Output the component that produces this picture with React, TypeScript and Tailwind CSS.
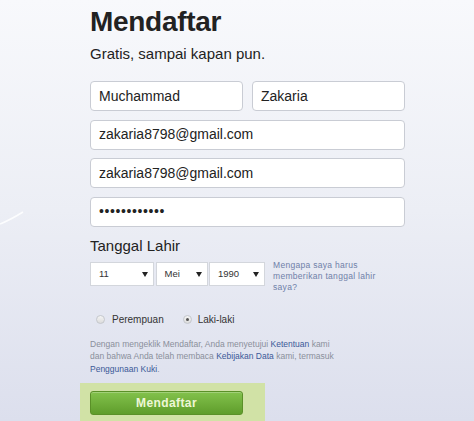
import React from 'react';

const font = "font-['Liberation_Sans',Arial,sans-serif]";

interface FieldProps {
    value: string,
    className?: string
}

const Field: React.FC<FieldProps> = (props) => (
    <div className={`h-[30px] bg-white border border-[#c9ccd4] rounded-[4px] flex items-center pl-[8px] text-[14px] text-[#222] ${props.className ?? ''}`}>
        {props.value}
    </div>
);

const Arrow = () => (
    <svg width="6" height="5" viewBox="0 0 6 5" className="shrink-0">
        <path d="M0 0 L6 0 L3 5 Z" fill="#222" />
    </svg>
);

const Select: React.FC<{ value: string, width: string }> = (props) => (
    <div className={`${props.width} h-[24px] bg-white border border-[#d3d6dc] flex items-center justify-between pl-[8px] pr-[5px] text-[9.5px] text-[#333]`}>
        <span>{props.value}</span>
        <Arrow />
    </div>
);

const Radio: React.FC<{ checked?: boolean }> = (props) => (
    <span className="w-[9px] h-[9px] rounded-full border border-[#c4c7cc] bg-linear-to-b from-[#f4f4f4] to-[#dcdcdc] flex items-center justify-center shrink-0">
        {props.checked && <span className="w-[3px] h-[3px] rounded-full bg-[#555]" />}
    </span>
);

export default function App() {
    return (
        <div className={`relative w-[474px] h-[421px] overflow-hidden bg-linear-to-b from-[#f8f9fc] via-[#eceef5] to-[#dcdfed] ${font}`}>
            {/* faint scribble on the left */}
            <svg className="absolute left-0 top-[205px]" width="30" height="24" viewBox="0 0 30 24">
                <path d="M0 19 Q10 15 23 7" stroke="#ffffff" strokeWidth="1.6" fill="none" opacity="0.85" />
            </svg>

            <div className="ml-[90px] w-[315px] pt-[8px] flex flex-col">
                {/* Heading */}
                <h1 className="text-[28px] leading-[28px] font-bold text-[#222] tracking-[-0.3px]">Mendaftar</h1>
                <p className="mt-[8px] text-[15px] leading-[20px] text-[#222]">Gratis, sampai kapan pun.</p>

                {/* Fields */}
                <div className="mt-[17px] flex flex-col gap-[8.5px]">
                    <div className="flex gap-[9px]">
                        <Field value="Muchammad" className="w-[153px]" />
                        <Field value="Zakaria" className="w-[153px]" />
                    </div>
                    <Field value="zakaria8798@gmail.com" />
                    <Field value="zakaria8798@gmail.com" />
                    <Field value="••••••••••••" className="text-[8px] tracking-[0.6px]" />
                </div>

                {/* Birthday */}
                <h2 className="mt-[9px] text-[15px] leading-[20px] text-[#222]">Tanggal Lahir</h2>
                <div className="mt-[6.5px] flex items-start">
                    <div className="flex gap-[1.5px]">
                        <Select value="11" width="w-[64px]" />
                        <Select value="Mei" width="w-[52px]" />
                        <Select value="1990" width="w-[56px]" />
                    </div>
                    <p className="ml-[8px] -mt-[2.5px] text-[8.5px] leading-[11px] text-[#6f80a8] tracking-[0.3px]">
                        Mengapa saya harus<br />memberikan tanggal lahir<br />saya?
                    </p>
                </div>

                {/* Gender */}
                <div className="mt-[21px] flex items-center text-[10px] text-[#333] h-[12px]">
                    <span className="ml-[5.5px]"><Radio /></span>
                    <span className="ml-[7.5px]">Perempuan</span>
                    <span className="ml-[19.5px]"><Radio checked /></span>
                    <span className="ml-[5.5px]">Laki-laki</span>
                </div>

                {/* Terms */}
                <div className="mt-[12px] text-[8.5px] leading-[12.6px] text-[#8a8f9b] whitespace-nowrap flex flex-col">
                    <span>Dengan mengeklik Mendaftar, Anda menyetujui <span className="text-[#3b5998]">Ketentuan</span> kami</span>
                    <span>dan bahwa Anda telah membaca <span className="text-[#3b5998]">Kebijakan Data</span> kami, termasuk</span>
                    <span><span className="text-[#3b5998]">Penggunaan Kuki</span>.</span>
                </div>

                {/* Submit */}
                <div className="mt-[8px] -ml-[10px] w-[185px] h-[39px] bg-[#d1e2a6] pl-[10px] pt-[7px]">
                    <button className="w-[153px] h-[24px] rounded-[3px] border border-[#5a9028] bg-linear-to-b from-[#83c24c] to-[#5f9d2b] text-[12px] font-bold text-[#eef7d6] tracking-[0.4px] shadow-[inset_0_1px_0_rgba(255,255,255,0.25)]">
                        Mendaftar
                    </button>
                </div>
            </div>
        </div>
    );
}
